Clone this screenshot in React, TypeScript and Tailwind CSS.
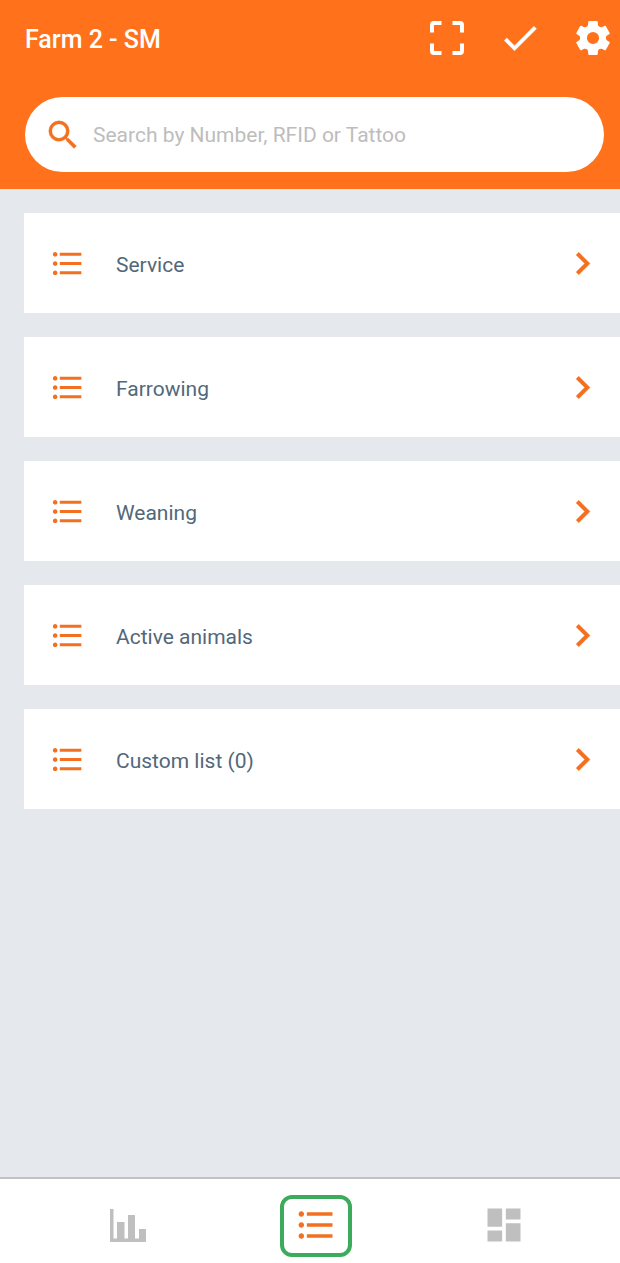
import { useState } from 'react';
import { MdDashboard, MdFormatListBulleted } from 'react-icons/md';

interface AnimalList {
  id: string;
  label: string;
}

const lists: AnimalList[] = [
  { id: 'service', label: 'Service' },
  { id: 'farrowing', label: 'Farrowing' },
  { id: 'weaning', label: 'Weaning' },
  { id: 'active', label: 'Active animals' },
  { id: 'custom', label: 'Custom list (0)' },
];

const CHECK = 'M9 16.170 4.830 12l-1.420 1.410L9 19 21 7l-1.410-1.410z';
const CHEVRON = 'M10 6 8.590 7.410 13.170 12l-4.580 4.590L10 18l6-6z';
const SEARCH =
  'M15.500 14h-.79l-.28-.27A6.471 6.471 0 0 0 16 9.500 6.500 6.500 0 1 0 9.500 16c1.610 0 3.090-.59 4.230-1.570l.27.28v.79l5 4.990L20.490 19l-4.990-5zm-6 0C7.010 14 5 11.990 5 9.500S7.010 5 9.500 5 14 7.010 14 9.500 11.990 14 9.500 14z';

interface IconProps {
  path: string;
  size: number;
  className?: string;
}

// slightly heavier than the stock material glyphs
function BoldIcon({ path, size, className }: IconProps) {
  return (
    <svg
      width={size}
      height={size}
      viewBox="0 0 24 24"
      fill="currentColor"
      stroke="currentColor"
      strokeWidth="0.2"
      className={className}
      aria-hidden="true"
    >
      <path d={path} />
    </svg>
  );
}

function ScanIcon() {
  return (
    <svg width="34" height="34" viewBox="0 0 34 34" fill="none" stroke="currentColor" strokeWidth="4" aria-hidden="true">
      <path d="M2 11.500V4a2 2 0 0 1 2-2h7.500M22.500 2H30a2 2 0 0 1 2 2v7.500M32 22.500V30a2 2 0 0 1-2 2h-7.500M11.500 32H4a2 2 0 0 1-2-2v-7.500" />
    </svg>
  );
}

function GearIcon() {
  return (
    <svg width="36" height="36" viewBox="-18 -18 36 36" fill="currentColor" aria-hidden="true">
      <circle r="9.500" fill="none" stroke="currentColor" strokeWidth="6.800" />
      {[0, 60, 120, 180, 240, 300].map((angle) => (
        <path
          key={angle}
          transform={`rotate(${angle})`}
          d="M-6.500-10.500Q-5.200-11.800-5-13L-4.700-16.300Q-4.600-17-3.900-17H3.900Q4.600-17 4.700-16.300L5-13Q5.200-11.800 6.500-10.500L4-7.500H-4z"
        />
      ))}
    </svg>
  );
}

function ChartIcon() {
  return (
    <svg width="36" height="33" viewBox="0 0 36 33" fill="currentColor" aria-hidden="true">
      <path d="M0 0h3.500v29.500H7V13h7.500v16.500H18V6h7v23.500h4V20h7v13H0z" />
    </svg>
  );
}

export default function App() {
  const [query, setQuery] = useState('');

  return (
    <div className="flex min-h-screen flex-col bg-[#e5e8ed] font-['Roboto',sans-serif]">
      <header className="bg-[#ff721b] pb-[17px]">
        {/* Title bar */}
        <div className="flex h-[76px] items-center justify-between pr-[5px] pl-[25px] text-white">
          <h1 className="pt-1 text-[25px] font-medium">Farm 2 - SM</h1>
          <div className="flex gap-[29px]">
            <button type="button" aria-label="Scan" className="flex size-11 items-center justify-center">
              <ScanIcon />
            </button>
            <button type="button" aria-label="Confirm" className="flex size-11 items-center justify-center">
              <BoldIcon path={CHECK} size={44} />
            </button>
            <button type="button" aria-label="Settings" className="flex size-11 items-center justify-center">
              <GearIcon />
            </button>
          </div>
        </div>

        {/* Search */}
        <label className="mt-[21px] mr-4 ml-[25px] flex h-[75px] items-center gap-[11px] rounded-full bg-white pr-8 pl-[19px]">
          <BoldIcon path={SEARCH} size={38} className="shrink-0 text-[#f37021]" />
          <input
            type="text"
            aria-label="Search"
            value={query}
            onChange={(e) => setQuery(e.target.value)}
            placeholder="Search by Number, RFID or Tattoo"
            className="min-w-0 flex-1 pt-0.5 text-[21px] text-[#52687a] outline-none placeholder:text-[#bdbdbd]"
          />
        </label>
      </header>

      <main className="flex-1 py-6 pl-6">
        <ul className="flex flex-col gap-6">
          {lists.map((list) => (
            <li key={list.id}>
              <button type="button" className="flex h-[100px] w-full items-center bg-white pr-[15px] pl-[25px] text-left">
                <MdFormatListBulleted size={37} className="shrink-0 text-[#f37021]" />
                <span className="ml-[30px] flex-1 pt-1.5 text-[21px] text-[#52687a]">{list.label}</span>
                <BoldIcon path={CHEVRON} size={45} className="shrink-0 text-[#f37021]" />
              </button>
            </li>
          ))}
        </ul>
      </main>

      {/* Bottom tabs */}
      <nav className="grid grid-cols-3 border-t-2 border-[#c2c2c4] bg-white pt-4 pr-[22px] pb-1.5 pl-[34px] text-[#bfbfbf]">
        <button type="button" aria-label="Statistics" className="flex h-[62px] items-center justify-center pb-0.5">
          <ChartIcon />
        </button>
        <button
          type="button"
          aria-label="Lists"
          aria-current="page"
          className="flex h-[62px] w-[72px] items-center justify-center justify-self-center rounded-xl border-4 border-[#3dab5c] pb-0.5 text-[#f37021]"
        >
          <MdFormatListBulleted size={44} />
        </button>
        <button type="button" aria-label="Dashboard" className="flex h-[62px] items-center justify-center pb-0.5">
          <MdDashboard size={44} />
        </button>
      </nav>
    </div>
  );
}
